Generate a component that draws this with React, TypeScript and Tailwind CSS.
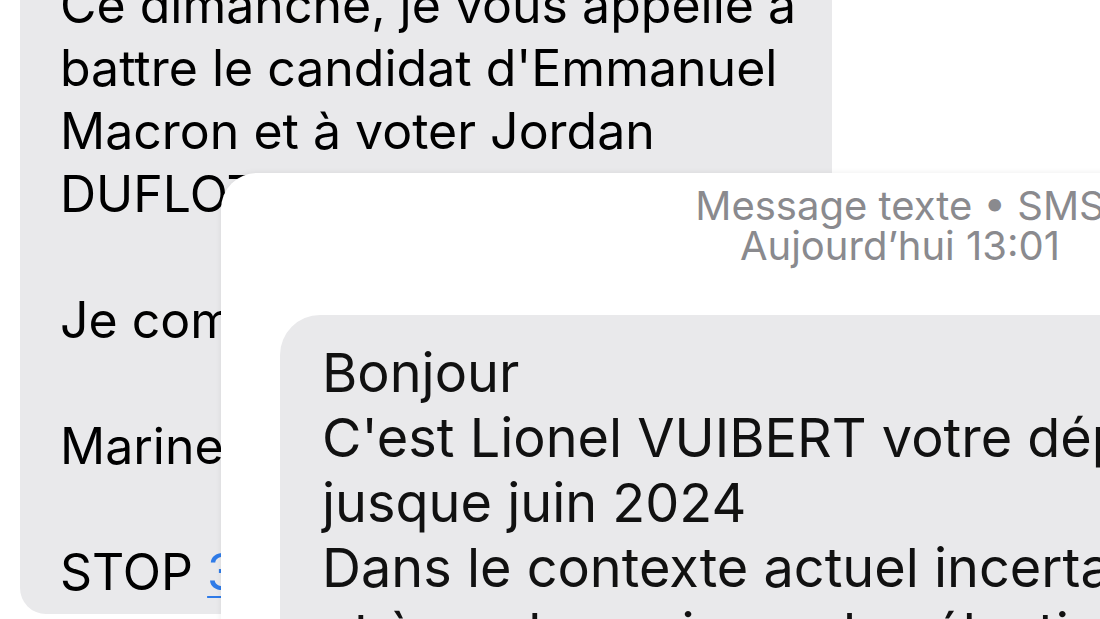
export default function App() {
  const font = { fontFamily: "Inter, 'Liberation Sans', sans-serif" };

  return (
    <div className="relative w-[1100px] h-[619px] overflow-hidden bg-white" style={font}>
      {/* Back message bubble */}
      <div className="ml-[20px] w-[812px] h-[614px] rounded-bl-[26px] bg-[#e9e9eb] pl-[40px] overflow-hidden">
        <div className="mt-[-26px] text-[50px] leading-[63px] text-black whitespace-nowrap">
          <p>Ce dimanche, je vous appelle à</p>
          <p>battre le candidat d'Emmanuel</p>
          <p>Macron et à voter Jordan</p>
          <p>DUFLOT, qui défendra</p>
          <p>&nbsp;</p>
          <p>Je compte sur vous.</p>
          <p>&nbsp;</p>
          <p>Marine Le Pen</p>
          <p>&nbsp;</p>
          <p>
            STOP <span className="text-[#2f7be8] underline decoration-2 underline-offset-[6px]">36123</span>
          </p>
        </div>
      </div>

      {/* Front screenshot */}
      <div className="absolute left-[221px] top-[173px] w-[1358px] h-[520px] rounded-tl-[36px] bg-white shadow-[0_0_6px_rgba(0,0,0,0.08)]">
        <div className="pt-[13px] flex flex-col items-center text-[40px] leading-[40px] text-[#8a8a8e]">
          <p>Message texte • SMS</p>
          <p>Aujourd’hui 13:01</p>
        </div>
        <div className="mt-[49px] ml-[59px] h-[400px] rounded-tl-[40px] bg-[#e9e9eb] pl-[42px] pt-[25px]">
          <div className="text-[54px] leading-[65px] text-[#111] whitespace-nowrap">
            <p>Bonjour</p>
            <p>C'est Lionel VUIBERT votre député</p>
            <p>jusque juin 2024</p>
            <p>Dans le contexte actuel incertain</p>
            <p>et à quelques jours des élections</p>
          </div>
        </div>
      </div>
    </div>
  );
}
